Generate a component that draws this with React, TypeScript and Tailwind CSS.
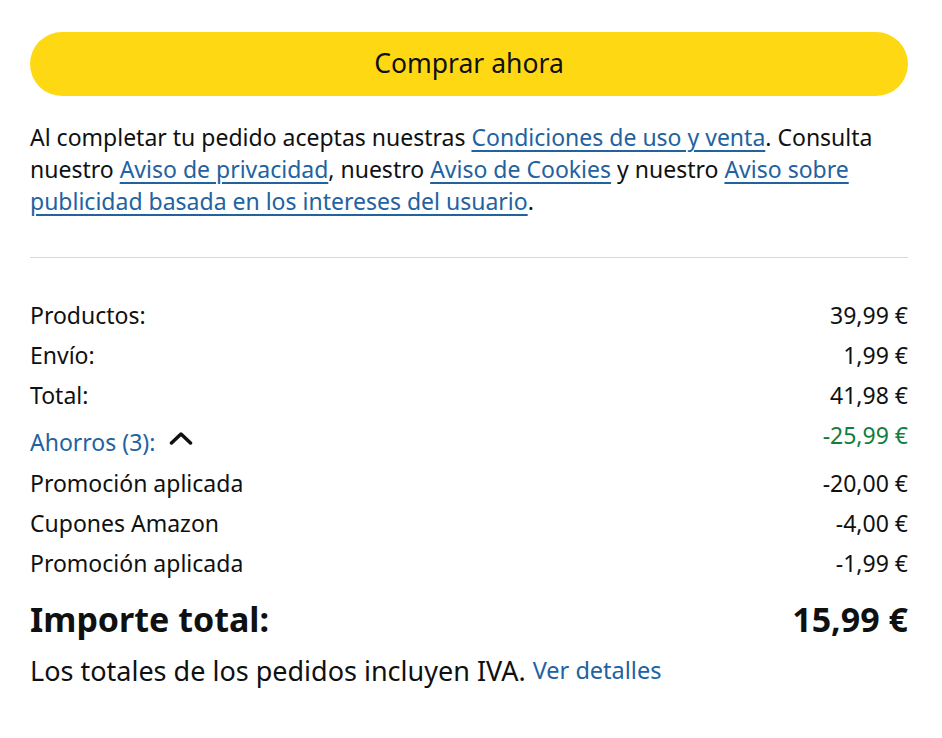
const rows = [
  { label: "Productos:", value: "39,99 €" },
  { label: "Envío:", value: "1,99 €" },
  { label: "Total:", value: "41,98 €" },
];

const savings = [
  { label: "Promoción aplicada", value: "-20,00 €" },
  { label: "Cupones Amazon", value: "-4,00 €" },
  { label: "Promoción aplicada", value: "-1,99 €" },
];

function Link({ children }: { children: React.ReactNode }) {
  return <a href="#" className="text-[#2162a1] underline underline-offset-[4px] decoration-[1.5px]">{children}</a>;
}

export default function App() {
  return (
    <div className="min-h-[738px] bg-white pl-[30px] pr-[34px] pt-[32px] text-[#0f1111] font-['Noto_Sans',sans-serif]">
      <button className="w-full h-[64px] rounded-full bg-[#ffd814] text-[26.5px] text-[#0f1111] flex items-center justify-center">
        Comprar ahora
      </button>

      <p className="mt-[25px] text-[23px] leading-[32px]">
        Al completar tu pedido aceptas nuestras <Link>Condiciones de uso y venta</Link>. Consulta nuestro{" "}
        <Link>Aviso de privacidad</Link>, nuestro <Link>Aviso de Cookies</Link> y nuestro{" "}
        <Link>Aviso sobre publicidad basada en los intereses del usuario</Link>.
      </p>

      <div className="mt-[40px] h-px bg-[#d5d9d9]" />

      <div className="mt-[37px] flex flex-col text-[23px]">
        {rows.map((r) => (
          <div key={r.label} className="flex justify-between h-[40px] items-center">
            <span>{r.label}</span>
            <span>{r.value}</span>
          </div>
        ))}
        <div className="flex justify-between h-[48px] items-start">
          <span className="flex items-center gap-[14px] text-[#2162a1] mt-[10px]">
            Ahorros (3):
            <svg width="24" height="14" viewBox="0 0 24 14" className="-mt-[8px]">
              <polyline points="2.5,12 12,3 21.5,12" fill="none" stroke="#0f1111" strokeWidth="3.5" strokeLinecap="round" strokeLinejoin="round" />
            </svg>
          </span>
          <span className="text-[#127d3c] mt-[3px]">-25,99 €</span>
        </div>
        {savings.map((r, i) => (
          <div key={i} className="flex justify-between h-[40px] items-center">
            <span>{r.label}</span>
            <span>{r.value}</span>
          </div>
        ))}
      </div>

      <div className="mt-[16px] h-[40px] flex justify-between items-center font-bold text-[34px]">
        <span>Importe total:</span>
        <span>15,99 €</span>
      </div>

      <p className="mt-[12px] h-[40px] flex items-center text-[27px]">
        Los totales de los pedidos incluyen IVA.&nbsp;<a href="#" className="text-[#2162a1] text-[23.5px]">Ver detalles</a>
      </p>
    </div>
  );
}
